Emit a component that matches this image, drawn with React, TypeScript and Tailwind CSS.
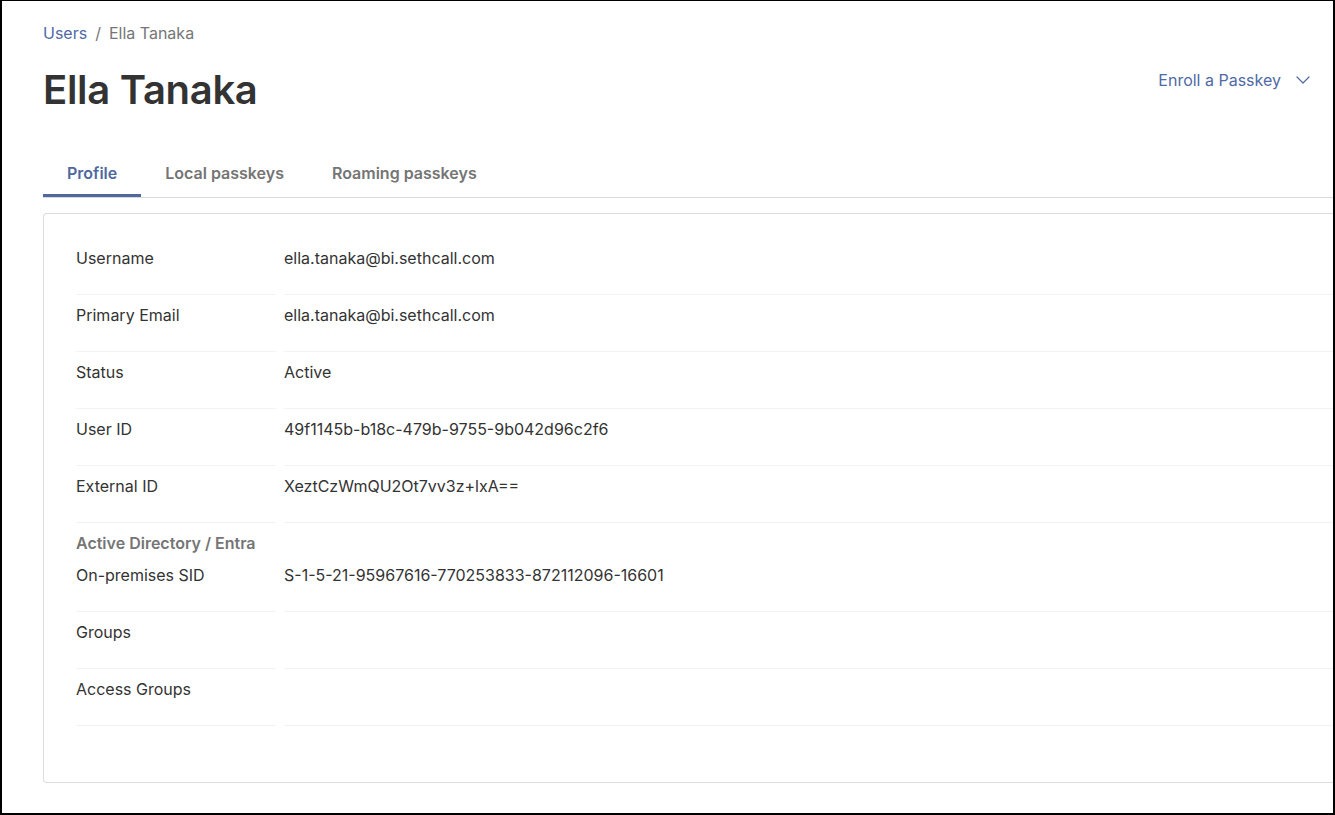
import React from "react";
import { ChevronDown } from "lucide-react";

interface FieldRowProps {
  label: string;
  value?: string;
  heading?: string;
}

const FieldRow: React.FC<FieldRowProps> = ({ label, value, heading }) => {
  return (
    <div className="flex">
      <div className="w-[200px] shrink-0 border-b border-[#f2f2f2] pt-2 pb-6">
        {heading && (
          <div className="mb-2 leading-6 font-semibold text-[#757575]">{heading}</div>
        )}
        <div className="leading-6">{label}</div>
      </div>
      <div
        className={
          heading
            ? "ml-2 flex-1 border-b border-[#f2f2f2] pt-[40px] pb-6 leading-6"
            : "ml-2 flex-1 border-b border-[#f2f2f2] pt-2 pb-6 leading-6"
        }
      >
        {value}
      </div>
    </div>
  );
};

const tabs = ["Profile", "Local passkeys", "Roaming passkeys"];

export default function App() {
  return (
    <div
      className="h-[815px] w-[1335px] overflow-hidden border-t border-r-2 border-b-2 border-l-2 border-black bg-white text-[16px] text-[#333333]"
      style={{ fontFamily: "Inter, 'Noto Sans', sans-serif" }}
    >
      <div className="pt-5 pl-[41px]">
        {/* header */}
        <div className="flex items-start justify-between pr-[18px]">
          <div>
            <nav className="flex items-center leading-6">
              <span className="text-[#4f6aa5]">Users</span>
              <span className="mx-2 text-[#767676]">/</span>
              <span className="text-[#767676]">Ella Tanaka</span>
            </nav>
            <h1 className="mt-[21px] text-[40px] leading-[48px] font-semibold tracking-[-0.3px] text-[#333333]">
              Ella Tanaka
            </h1>
          </div>
          <button className="mt-[47px] flex items-center leading-6 text-[#4f6aa5]">
            Enroll a Passkey
            <ChevronDown className="ml-[10px] h-[24px] w-[24px]" strokeWidth={1.2} />
          </button>
        </div>

        {/* tabs */}
        <div className="mt-[40px] flex border-b border-[#d9d9d9]">
          {tabs.map((t, i) => (
            <div
              key={t}
              className={
                i === 0
                  ? "border-b-[3px] border-[#5068a0] px-6 pt-[7px] pb-[9px] leading-6 font-semibold text-[#5068a0]"
                  : "border-b-[3px] border-transparent px-6 pt-[7px] pb-[9px] leading-6 font-semibold text-[#757575]"
              }
            >
              {t}
            </div>
          ))}
        </div>

        {/* card */}
        <div className="mt-[15px] rounded-l-[4px] border-t border-b border-l border-[#dcdcdc] pt-6 pb-14 pl-8">
          <FieldRow label="Username" value="ella.tanaka@bi.sethcall.com" />
          <FieldRow label="Primary Email" value="ella.tanaka@bi.sethcall.com" />
          <FieldRow label="Status" value="Active" />
          <FieldRow label="User ID" value="49f1145b-b18c-479b-9755-9b042d96c2f6" />
          <FieldRow label="External ID" value="XeztCzWmQU2Ot7vv3z+lxA==" />
          <FieldRow
            heading="Active Directory / Entra"
            label="On-premises SID"
            value="S-1-5-21-95967616-770253833-872112096-16601"
          />
          <FieldRow label="Groups" />
          <FieldRow label="Access Groups" />
        </div>
      </div>
    </div>
  );
}
